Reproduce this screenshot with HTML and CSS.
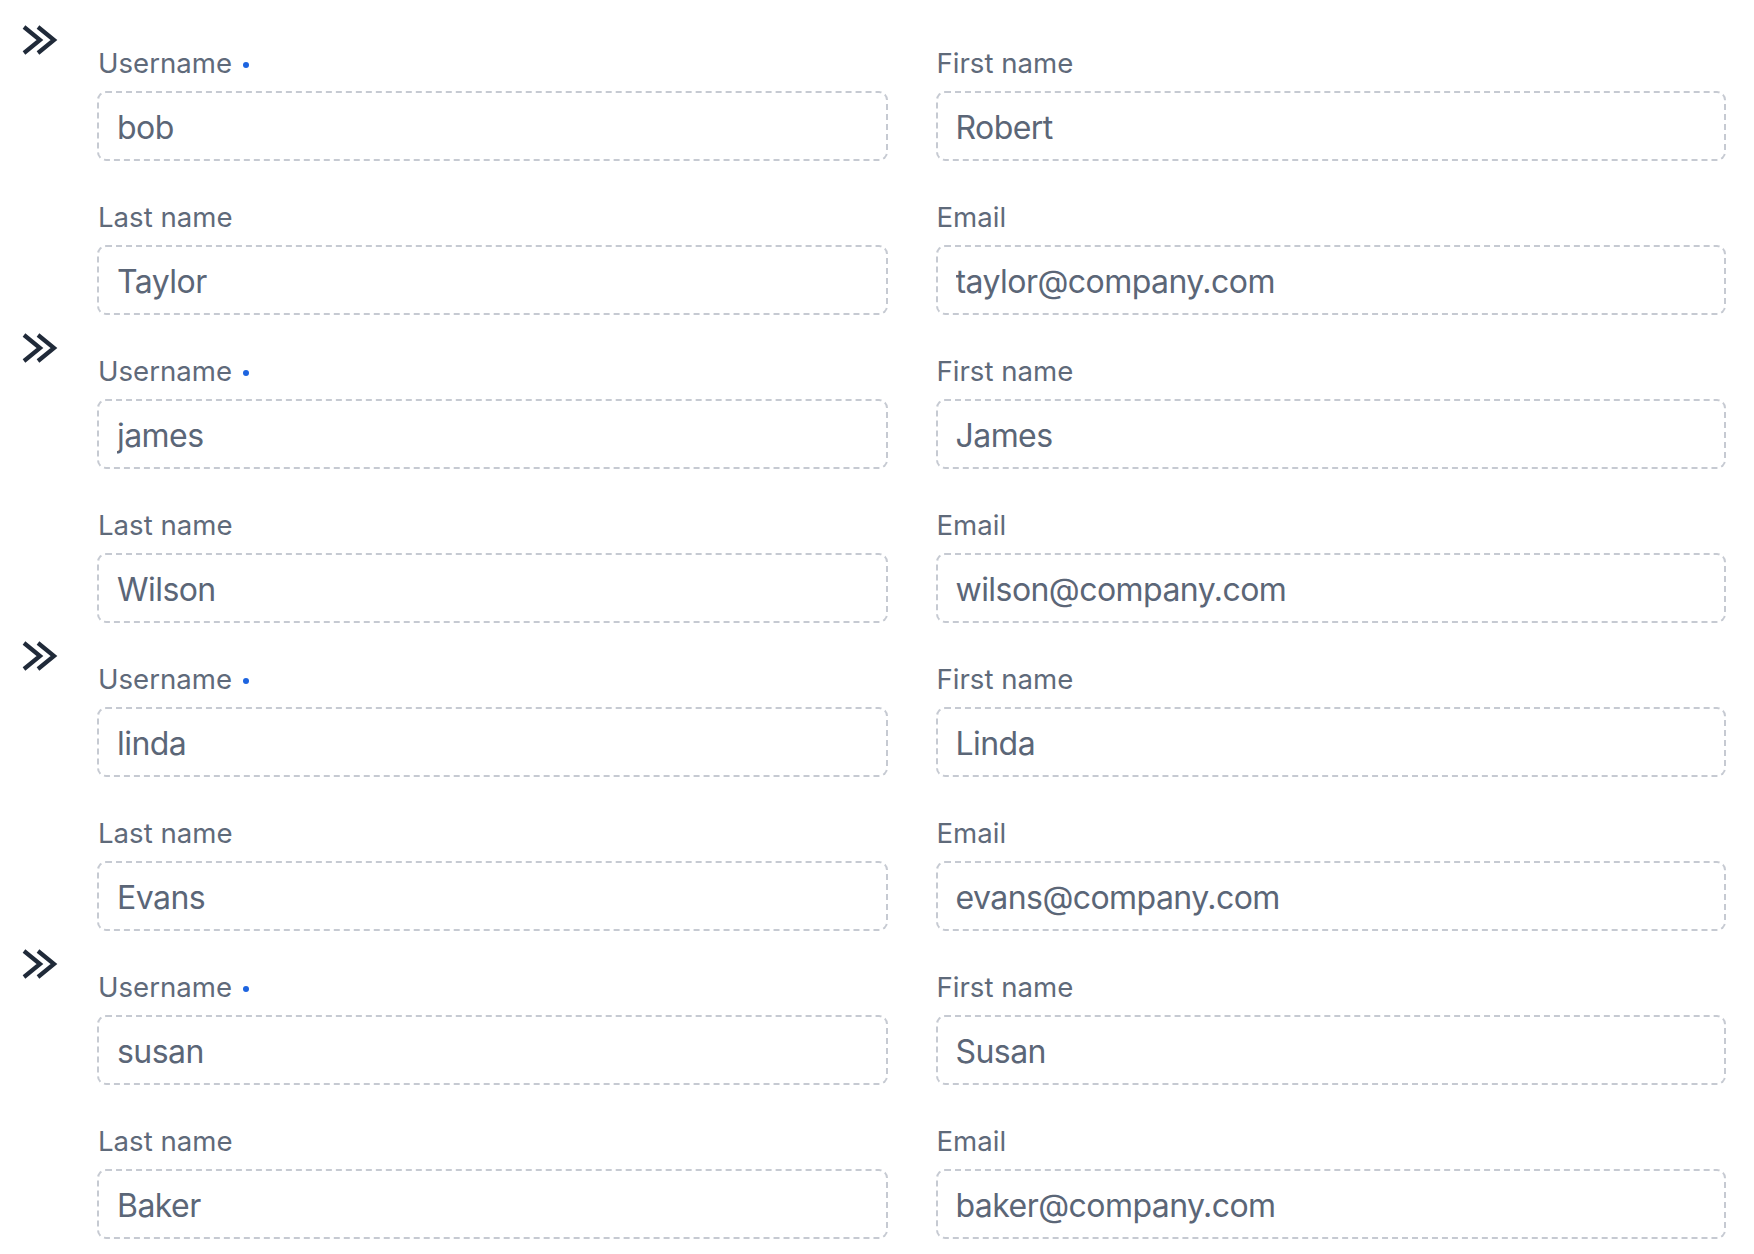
FILE: index.html
```html
<!DOCTYPE html>
<html>
<head>
<meta charset="utf-8">
<link rel="stylesheet" href="styles.css">
</head>
<body>
<div class="list">
  <section class="record">
    <div class="marker"><svg class="chev" viewBox="0 0 36 30" width="36" height="30"><polyline points="2,2 18,15 2,28"/><polyline points="16,2 32,15 16,28"/></svg></div>
    <div class="fields">
      <div class="field"><label class="lbl">Username <span class="req"></span></label><input class="inp" value="bob" readonly></div>
      <div class="field"><label class="lbl">First name</label><input class="inp" value="Robert" readonly></div>
      <div class="field"><label class="lbl">Last name</label><input class="inp" value="Taylor" readonly></div>
      <div class="field"><label class="lbl">Email</label><input class="inp" value="taylor@company.com" readonly></div>
    </div>
  </section>
  <section class="record">
    <div class="marker"><svg class="chev" viewBox="0 0 36 30" width="36" height="30"><polyline points="2,2 18,15 2,28"/><polyline points="16,2 32,15 16,28"/></svg></div>
    <div class="fields">
      <div class="field"><label class="lbl">Username <span class="req"></span></label><input class="inp" value="james" readonly></div>
      <div class="field"><label class="lbl">First name</label><input class="inp" value="James" readonly></div>
      <div class="field"><label class="lbl">Last name</label><input class="inp" value="Wilson" readonly></div>
      <div class="field"><label class="lbl">Email</label><input class="inp" value="wilson@company.com" readonly></div>
    </div>
  </section>
  <section class="record">
    <div class="marker"><svg class="chev" viewBox="0 0 36 30" width="36" height="30"><polyline points="2,2 18,15 2,28"/><polyline points="16,2 32,15 16,28"/></svg></div>
    <div class="fields">
      <div class="field"><label class="lbl">Username <span class="req"></span></label><input class="inp" value="linda" readonly></div>
      <div class="field"><label class="lbl">First name</label><input class="inp" value="Linda" readonly></div>
      <div class="field"><label class="lbl">Last name</label><input class="inp" value="Evans" readonly></div>
      <div class="field"><label class="lbl">Email</label><input class="inp" value="evans@company.com" readonly></div>
    </div>
  </section>
  <section class="record">
    <div class="marker"><svg class="chev" viewBox="0 0 36 30" width="36" height="30"><polyline points="2,2 18,15 2,28"/><polyline points="16,2 32,15 16,28"/></svg></div>
    <div class="fields">
      <div class="field"><label class="lbl">Username <span class="req"></span></label><input class="inp" value="susan" readonly></div>
      <div class="field"><label class="lbl">First name</label><input class="inp" value="Susan" readonly></div>
      <div class="field"><label class="lbl">Last name</label><input class="inp" value="Baker" readonly></div>
      <div class="field"><label class="lbl">Email</label><input class="inp" value="baker@company.com" readonly></div>
    </div>
  </section>
</div>
</body>
</html>
```
FILE: styles.css
```css
html, body {
  margin: 0;
  padding: 0;
  background: #ffffff;
}
body {
  font-family: Inter, "Noto Sans", sans-serif;
}
.list {
  display: flex;
  flex-direction: column;
  gap: 18px;
  padding: 25px 28px 0 22px;
}
.record {
  display: flex;
  align-items: flex-start;
}
.marker {
  width: 75px;
  flex: none;
}
.chev {
  display: block;
  overflow: visible;
  fill: none;
  stroke: #202a39;
  stroke-width: 4.2;
  stroke-linejoin: miter;
  stroke-linecap: butt;
}
.fields {
  flex: 1;
  display: grid;
  grid-template-columns: 1fr 1fr;
  column-gap: 48px;
  row-gap: 40px;
  padding-top: 22px;
}
.field {
  display: flex;
  flex-direction: column;
}
.lbl {
  font-size: 27.6px;
  line-height: 32px;
  color: #5f6a7a;
  margin: 0 0 12px 1px;
  display: flex;
  align-items: center;
}
.req {
  display: inline-block;
  width: 6px;
  height: 6px;
  border-radius: 50%;
  background: #1d64e0;
  margin-left: 11px;
  margin-top: 4px;
}
.inp {
  box-sizing: border-box;
  height: 70px;
  width: 100%;
  border: 2px dashed #c6cad2;
  border-radius: 9px;
  padding: 2px 18px 0;
  font-family: Inter, "Noto Sans", sans-serif;
  font-size: 32px;
  letter-spacing: -0.55px;
  color: #5b6677;
  background: #ffffff;
  outline: none;
  margin: 0;
}
```
